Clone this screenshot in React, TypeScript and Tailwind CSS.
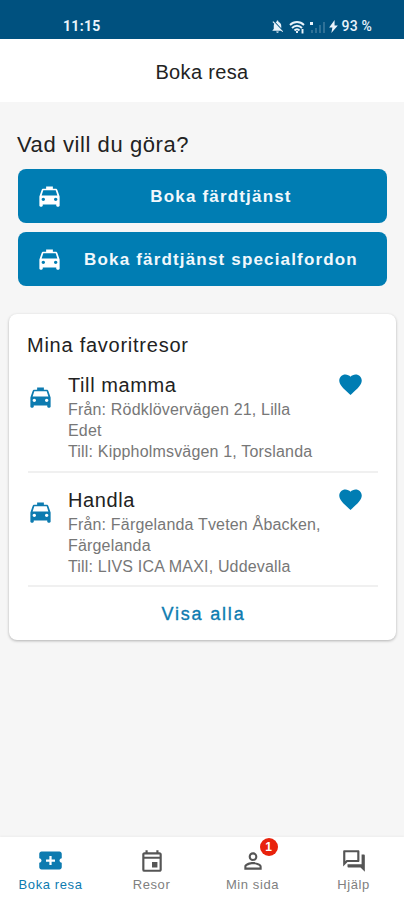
import type { ReactNode } from 'react';
import {
  MdFavorite,
  MdLocalTaxi,
  MdNotificationsOff,
  MdOutlineEvent,
  MdOutlineQuestionAnswer,
  MdPersonOutline,
} from 'react-icons/md';

interface Favorite {
  name: string;
  from: string;
  to: string;
}

const favorites: Favorite[] = [
  { name: 'Till mamma', from: 'Rödklövervägen 21, Lilla Edet', to: 'Kippholmsvägen 1, Torslanda' },
  { name: 'Handla', from: 'Färgelanda Tveten Åbacken, Färgelanda', to: 'LIVS ICA MAXI, Uddevalla' },
];

export default function App() {
  return (
    <div className="flex h-[900px] w-[404px] flex-col overflow-hidden bg-[#f6f6f6] font-['Liberation_Sans',Arial,sans-serif] text-[#222]">
      <StatusBar />
      <header className="flex h-[63px] shrink-0 items-center justify-center bg-white pt-[2px]">
        <h1 className="text-[20px] tracking-[0.35px]">Boka resa</h1>
      </header>

      <main className="flex-1 pt-[28px]">
        <h2 className="pl-[17px] text-[22px] leading-[30px] tracking-[0.58px]">Vad vill du göra?</h2>
        <div className="mt-[9px] flex flex-col gap-[9px] pr-[17px] pl-[18px]">
          <BookButton label="Boka färdtjänst" />
          <BookButton label="Boka färdtjänst specialfordon" />
        </div>

        <section className="mx-[9px] mt-[28px] h-[326px] w-[387px] rounded-[8px] bg-white px-[18px] pt-[18px] shadow-[0_1px_3px_rgba(0,0,0,0.28)]">
          <h3 className="-mb-px text-[20px] leading-[27px] tracking-[0.75px]">Mina favoritresor</h3>
          {favorites.map((favorite) => (
            <FavoriteRow key={favorite.name} favorite={favorite} />
          ))}
          <button className="block h-[55px] w-full pl-[2px] text-center text-[18px] tracking-[1.8px] text-[#0d7bb0] [-webkit-text-stroke:0.35px_#0d7bb0]">
            Visa alla
          </button>
        </section>
      </main>

      <nav className="grid h-[63px] shrink-0 grid-cols-4 bg-white shadow-[0_-1px_2px_rgba(0,0,0,0.04)]">
        <NavItem label="Boka resa" active icon={<TicketIcon />} />
        <NavItem label="Resor" icon={<MdOutlineEvent size={26} />} />
        <NavItem label="Min sida" badge={1} icon={<MdPersonOutline size={26} />} />
        <NavItem label="Hjälp" icon={<MdOutlineQuestionAnswer size={26} />} />
      </nav>
    </div>
  );
}

function StatusBar() {
  return (
    <div className="flex h-[39px] shrink-0 items-end justify-between bg-[#00517f] pr-[32px] pb-[4px] pl-[63px] font-[Roboto,sans-serif] text-[14px] leading-[17px] font-bold text-[#e9f3fb]">
      <span className="tracking-[0.3px]">11:15</span>
      <div className="flex items-center">
        <MdNotificationsOff size={15} />
        <WifiIcon />
        <SignalIcon />
        <BoltIcon />
        <span className="ml-[3px] font-medium tracking-[0.2px]">93 %</span>
      </div>
    </div>
  );
}

function BookButton({ label }: { label: string }) {
  return (
    <button className="flex h-[54px] items-center rounded-[8px] bg-[#007db3] pr-[8px] pl-[18px] text-[#f1f8fc]">
      <MdLocalTaxi size={27} className="shrink-0 text-white" />
      <span className="flex-1 pt-px text-center text-[17px] font-bold tracking-[1.17px] whitespace-nowrap">
        {label}
      </span>
    </button>
  );
}

function FavoriteRow({ favorite }: { favorite: Favorite }) {
  return (
    <div className="ml-px flex h-[114.5px] border-b-2 border-[#f0f0f0] pt-[14px]">
      <MdLocalTaxi size={27} className="mt-[12px] -ml-px shrink-0 text-[#0d7bb0]" />
      <div className="ml-[14px] w-[256px]">
        <p className="text-[20px] leading-[27px] tracking-[0.6px]">{favorite.name}</p>
        <div className="text-[16px] leading-[21px] tracking-[0.18px] text-[#777]">
          <p>{`Från: ${favorite.from}`}</p>
          <p>{`Till: ${favorite.to}`}</p>
        </div>
      </div>
      <MdFavorite size={27} className="-mt-px ml-[13px] shrink-0 text-[#007db3]" />
    </div>
  );
}

interface NavItemProps {
  label: string;
  icon: ReactNode;
  active?: boolean;
  badge?: number;
}

function NavItem({ label, icon, active, badge }: NavItemProps) {
  return (
    <button
      className={`flex flex-col items-center pt-[10px] ${active ? 'text-[#0d7bb0]' : 'text-[#808080]'}`}
    >
      <span className={`relative flex h-[27px] items-center ${active ? '' : 'text-[#555]'}`}>
        {icon}
        {badge && (
          <span className="absolute -top-[9px] left-[20px] flex h-[18px] w-[18px] items-center justify-center rounded-full bg-[#e8220c] text-[12px] font-bold text-white">
            {badge}
          </span>
        )}
      </span>
      <span className="mt-[2px] text-[13px] leading-[18px] tracking-[0.6px]">{label}</span>
    </button>
  );
}

function TicketIcon() {
  return (
    <svg width="27" height="27" viewBox="0 0 24 24" fill="currentColor">
      <path
        fillRule="evenodd"
        d="M22 10V6c0-1.100-.9-2-2-2H4c-1.100 0-2 .9-2 2v4c1.100 0 2 .9 2 2s-.9 2-2 2v4c0 1.100.9 2 2 2h16c1.100 0 2-.9 2-2v-4c-1.100 0-2-.9-2-2s.9-2 2-2zM11 8h2v3h3v2h-3v3h-2v-3H8v-2h3z"
      />
    </svg>
  );
}

function WifiIcon() {
  return (
    <svg className="ml-[4px]" width="17" height="14" viewBox="0 0 17 14" fill="none" stroke="currentColor" strokeWidth="1.9">
      <path d="M1 5c4-4 10-4 14 0" />
      <path d="M3 8c3-3 7-3 10 0" />
      <path d="M5.500 10.500c1.500-1.600 3.500-1.600 5 0" />
      <path d="M8 11v2M13.500 9v4.500" />
    </svg>
  );
}

function SignalIcon() {
  return (
    <svg className="ml-[3px]" width="17" height="14" viewBox="0 0 17 14" fill="currentColor">
      <path d="M1 2h3v3H1z" />
      <path d="M2 10h2v3H2zM6 8h2v5H6zM10 5h2v8h-2zM14 2h2v11h-2z" opacity="0.2" />
    </svg>
  );
}

function BoltIcon() {
  return (
    <svg className="ml-[3px]" width="9" height="13" viewBox="0 0 8 12" fill="currentColor">
      <path d="M5 0L0 7h3l-1 5 6-7H5z" />
    </svg>
  );
}
